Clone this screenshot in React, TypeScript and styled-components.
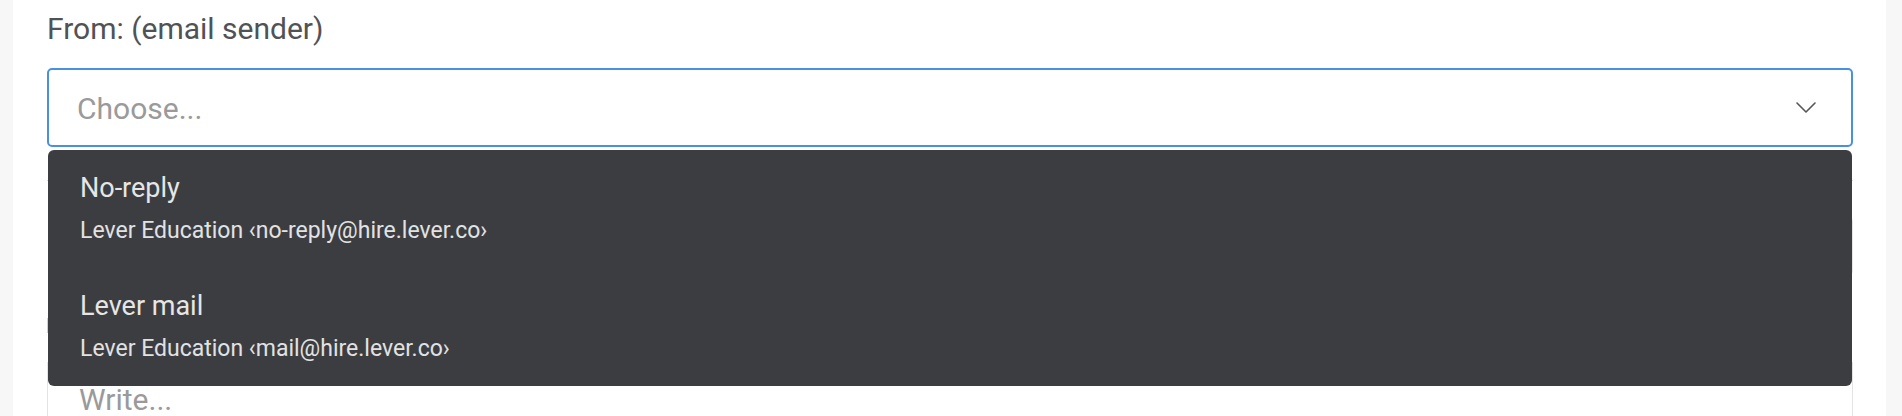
import React from "react";
import styled, { createGlobalStyle } from "styled-components";

const Global = createGlobalStyle`
  html, body {
    margin: 0;
    padding: 0;
    background: #f7f7f7;
  }
  body {
    font-family: Roboto, "Noto Sans", "Liberation Sans", sans-serif;
    -webkit-font-smoothing: antialiased;
  }
`;

const Page = styled.div`
  display: flex;
  height: 416px;
  padding: 0 16px 0 13px;
  background: #f7f7f7;
  overflow: hidden;
`;

const Panel = styled.div`
  flex: 1;
  display: flex;
  flex-direction: column;
  background: #ffffff;
  padding: 11px 33px 0 34px;
`;

const Field = styled.div`
  position: relative;
  display: flex;
  flex-direction: column;
`;

const Label = styled.label`
  font-size: 30px;
  line-height: 36px;
  color: #515256;
`;

const SelectBox = styled.div`
  margin-top: 21px;
  height: 79px;
  box-sizing: border-box;
  display: flex;
  align-items: center;
  justify-content: space-between;
  padding: 2px 35px 0 28px;
  border: 2px solid #4a90e2;
  border-radius: 5px;
  background: #fff;
`;

const Placeholder = styled.span`
  font-size: 30px;
  line-height: 36px;
  color: #9a9a9a;
`;

const Chevron = styled.svg`
  width: 20px;
  height: 11px;
  margin-top: -2px;
`;

const Menu = styled.ul`
  position: absolute;
  top: calc(100% + 3px);
  left: 1px;
  right: 1px;
  margin: 0;
  padding: 0;
  list-style: none;
  background: #3c3d40;
  border-radius: 6px;
  z-index: 10;
`;

const Option = styled.li`
  height: 118px;
  box-sizing: border-box;
  padding: 22px 32px 0 32px;
  display: flex;
  flex-direction: column;
`;

const OptionTitle = styled.span`
  font-size: 27px;
  line-height: 32px;
  color: #e6e6e6;
`;

const OptionSub = styled.span`
  margin-top: 13px;
  font-size: 23px;
  line-height: 28px;
  color: #e2e2e2;
`;

const Divider = styled.hr`
  margin: 33px 0 0 0;
  border: 0;
  height: 1px;
  background: #dcdcdc;
`;

const SubjectInput = styled.div`
  margin: 36px 0 0 140px;
  height: 58px;
  box-sizing: border-box;
  border: 1px solid #e6e6e6;
  border-radius: 4px;
`;

const ToolbarEdge = styled.div`
  margin-top: 43px;
  height: 15px;
  border-left: 1px solid #cfcfcf;
`;

const TextArea = styled.div`
  margin-top: 29px;
  flex: 1;
  min-height: 0;
  border: 1px solid #e3e3e3;
  border-bottom: 0;
  padding: 19px 31px 0 31px;
  overflow: hidden;
`;

const WritePlaceholder = styled.span`
  font-size: 30px;
  line-height: 36px;
  color: #9a9a9a;
`;

const options = [
  { title: "No-reply", sub: "Lever Education ‹no-reply@hire.lever.co›" },
  { title: "Lever mail", sub: "Lever Education ‹mail@hire.lever.co›" },
];

export default function App() {
  return (
    <>
      <Global />
      <Page>
        <Panel>
          <Field>
            <Label>From: (email sender)</Label>
            <SelectBox>
              <Placeholder>Choose...</Placeholder>
              <Chevron viewBox="0 0 20 11" fill="none">
                <path
                  d="M1 1 L10 10 L19 1"
                  stroke="#555659"
                  strokeWidth="1.6"
                  strokeLinecap="round"
                  strokeLinejoin="round"
                />
              </Chevron>
            </SelectBox>
            <Menu>
              {options.map((o) => (
                <Option key={o.title}>
                  <OptionTitle>{o.title}</OptionTitle>
                  <OptionSub>{o.sub}</OptionSub>
                </Option>
              ))}
            </Menu>
          </Field>
          <Divider />
          <SubjectInput />
          <ToolbarEdge />
          <TextArea>
            <WritePlaceholder>Write...</WritePlaceholder>
          </TextArea>
        </Panel>
      </Page>
    </>
  );
}
